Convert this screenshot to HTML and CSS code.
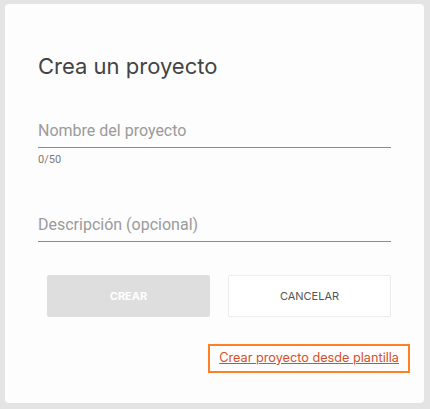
FILE: index.html
```html
<!DOCTYPE html>
<html lang="es">
<head>
    <meta charset="utf-8">
    <meta name="viewport" content="width=device-width, initial-scale=1">
    <title>Crea un proyecto</title>
    <link rel="stylesheet" href="styles.css">
</head>
<body>

<div class="dialog">
    <h2 class="title">Crea un proyecto</h2>

    <form class="project-form">
        <div class="field">
            <input class="field-input" type="text" maxlength="50" placeholder="Nombre del proyecto">
            <span class="counter">0/50</span>
        </div>

        <div class="field field-desc">
            <input class="field-input" type="text" placeholder="Descripción (opcional)">
        </div>

        <div class="actions">
            <button type="button" class="btn btn-primary" disabled>CREAR</button>
            <button type="button" class="btn btn-secondary">CANCELAR</button>
        </div>
    </form>

    <div class="template-row">
        <a href="#" class="template-link">Crear proyecto desde plantilla</a>
    </div>
</div>

</body>
</html>
```

FILE: styles.css
```css
body {
    margin: 0;
    padding: 4px 6px 6px 5px;
    background: #e4e4e4;
}

.dialog {
    box-sizing: border-box;
    width: 419px;
    height: 399px;
    padding: 0 33px;
    background: #fdfdfd;
    border-radius: 4px;
    font-family: Inter, "Noto Sans", sans-serif;
}

.title {
    margin: 0;
    padding-top: 48px;
    font-size: 22px;
    line-height: 28px;
    font-weight: 400;
    color: #444444;
}

.project-form {
    margin-top: 41px;
}

.field {
    display: flex;
    flex-direction: column;
}

.field-input {
    border: 0;
    border-bottom: 1px solid #8c8c8c;
    background: transparent;
    outline: 0;
    padding: 0 0 6px 0;
    font-family: Roboto, "Liberation Sans", sans-serif;
    font-size: 16px;
    line-height: 20px;
    color: #444444;
}

.field-input::placeholder {
    color: #9a9a9a;
}

.counter {
    margin-top: 5px;
    font-family: Roboto, "Liberation Sans", sans-serif;
    font-size: 11px;
    line-height: 13px;
    color: #7a7a7a;
}

.field-desc {
    margin-top: 49px;
}

.actions {
    display: flex;
    gap: 18px;
    margin: 33px 0 0 9px;
}

.btn {
    box-sizing: border-box;
    width: 163px;
    height: 42px;
    border-radius: 2px;
    font-family: Inter, "Noto Sans", sans-serif;
    font-size: 11px;
}

.btn-primary {
    border: 0;
    background: #dedede;
    color: #ffffff;
    font-weight: 700;
}

.btn-secondary {
    border: 1px solid #ececec;
    background: #ffffff;
    color: #555555;
    cursor: pointer;
}

.template-row {
    display: flex;
    justify-content: flex-end;
    margin: 27px -19px 0 0;
}

.template-link {
    display: inline-block;
    padding: 5px 9px 6px 9px;
    border: 2px solid #ff7f27;
    font-size: 12.7px;
    line-height: 14px;
    color: #d4502a;
    text-decoration: underline;
}
```
